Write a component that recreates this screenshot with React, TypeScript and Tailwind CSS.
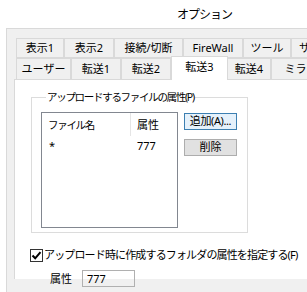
import React from 'react';

const rowOne = [
  { label: '表示1', w: 'w-[48px]' },
  { label: '表示2', w: 'w-[50px]' },
  { label: '接続/切断', w: 'w-[69px]' },
  { label: 'FireWall', w: 'w-[60px]' },
  { label: 'ツール', w: 'w-[48px]' },
  { label: 'サーバー', w: 'w-[60px]' },
];

const tabBase =
  'shrink-0 flex items-center justify-center border-l border-t border-r border-[#d9d9d9] bg-[#f0f0f0] whitespace-nowrap overflow-hidden';

function CheckMark() {
  return (
    <svg width="11" height="11" viewBox="0 0 11 11">
      <path d="M1.5 5.5 L4.2 8.3 L9.5 2.2" fill="none" stroke="#000" strokeWidth="2" />
    </svg>
  );
}

export default function App() {
  return (
    <div className="w-[307px] h-[292px] overflow-hidden bg-white text-black text-[11px] leading-[16px] font-['Noto_Sans','Noto_Sans_CJK_JP',sans-serif]">
      <div className="h-[28px] pl-[177px] pt-[6px] text-[12px] leading-[16px] tracking-[-1px] font-['Noto_Sans_CJK_JP',sans-serif]">
        オプション
      </div>

      <div className="ml-[6px] h-[264px] border-l border-t border-[#d9d9d9] bg-[#f0f0f0] pl-[7px] pt-[9px]">
        {/* tab strip, row 1 */}
        <div className="ml-[2px] flex h-[20px]">
          {rowOne.map((t) => (
            <div key={t.label} className={`${tabBase} ${t.w} border-b pb-px`}>
              {t.label}
            </div>
          ))}
        </div>

        {/* tab strip, row 2 */}
        <div className="ml-[2px] flex h-[21px] items-end">
          <div className={`${tabBase} w-[55px] h-[21px]`}>ユーザー</div>
          <div className={`${tabBase} w-[50px] h-[21px]`}>転送1</div>
          <div className={`${tabBase} w-[50px] h-[21px]`}>転送2</div>
          <div className="relative z-10 -mb-px flex h-[24px] w-[57px] shrink-0 items-start justify-center border-l border-t border-r border-[#d9d9d9] bg-white pt-[2px]">
            転送3
          </div>
          <div className={`${tabBase} w-[43px] h-[21px] border-l-0`}>転送4</div>
          <div className={`${tabBase} w-[60px] h-[21px]`}>ミラー</div>
        </div>

        {/* page */}
        <div className="h-[200px] border-l border-t border-[#d9d9d9] bg-white">
          <fieldset className="ml-[16px] mt-[9px] h-[144px] w-[217px] border border-[#dcdcdc] pl-[9px] pt-[7px]">
            <legend className="ml-[5px] px-px text-[10.5px] leading-[16px] tracking-[-1.3px]">
              アップロードするファイルの属性(P)
            </legend>
            <div className="flex">
              <div className="h-[116px] w-[137px] border border-[#828790]">
                <div className="flex h-[23px] items-center">
                  <div className="w-[88px] pl-[6px] text-[10.5px] tracking-[-1.3px]">ファイル名</div>
                  <div className="h-full w-px bg-[#e5e5e5]" />
                  <div className="pl-[6px]">属性</div>
                </div>
                <div className="flex h-[19px] items-center">
                  <div className="w-[89px] pl-[7px]">*</div>
                  <div className="pl-[6px]">777</div>
                </div>
              </div>
              <div className="ml-[6px] mt-px flex flex-col gap-[9px]">
                <button className="flex h-[17px] w-[53px] items-center justify-center border border-[#3c7fb1] bg-[#e5f1fb] pb-px tracking-[-0.4px]">
                  追加(A)...
                </button>
                <button className="flex h-[17px] w-[53px] items-center justify-center border border-[#adadad] bg-[#e1e1e1] pb-px">
                  削除
                </button>
              </div>
            </div>
          </fieldset>

          <label className="ml-[15px] mt-[14px] flex items-center">
            <span className="flex h-[13px] w-[13px] items-center justify-center border border-[#333333] bg-white">
              <CheckMark />
            </span>
            <span className="ml-px tracking-[-0.85px]">アップロード時に作成するフォルダの属性を指定する(F)</span>
          </label>

          <div className="ml-[35px] mt-[7px] flex items-center">
            <span className="w-[32px]">属性</span>
            <div className="flex h-[17px] w-[53px] items-center border border-[#b0b0b0] pl-[4px]">777</div>
          </div>
        </div>
      </div>
    </div>
  );
}
